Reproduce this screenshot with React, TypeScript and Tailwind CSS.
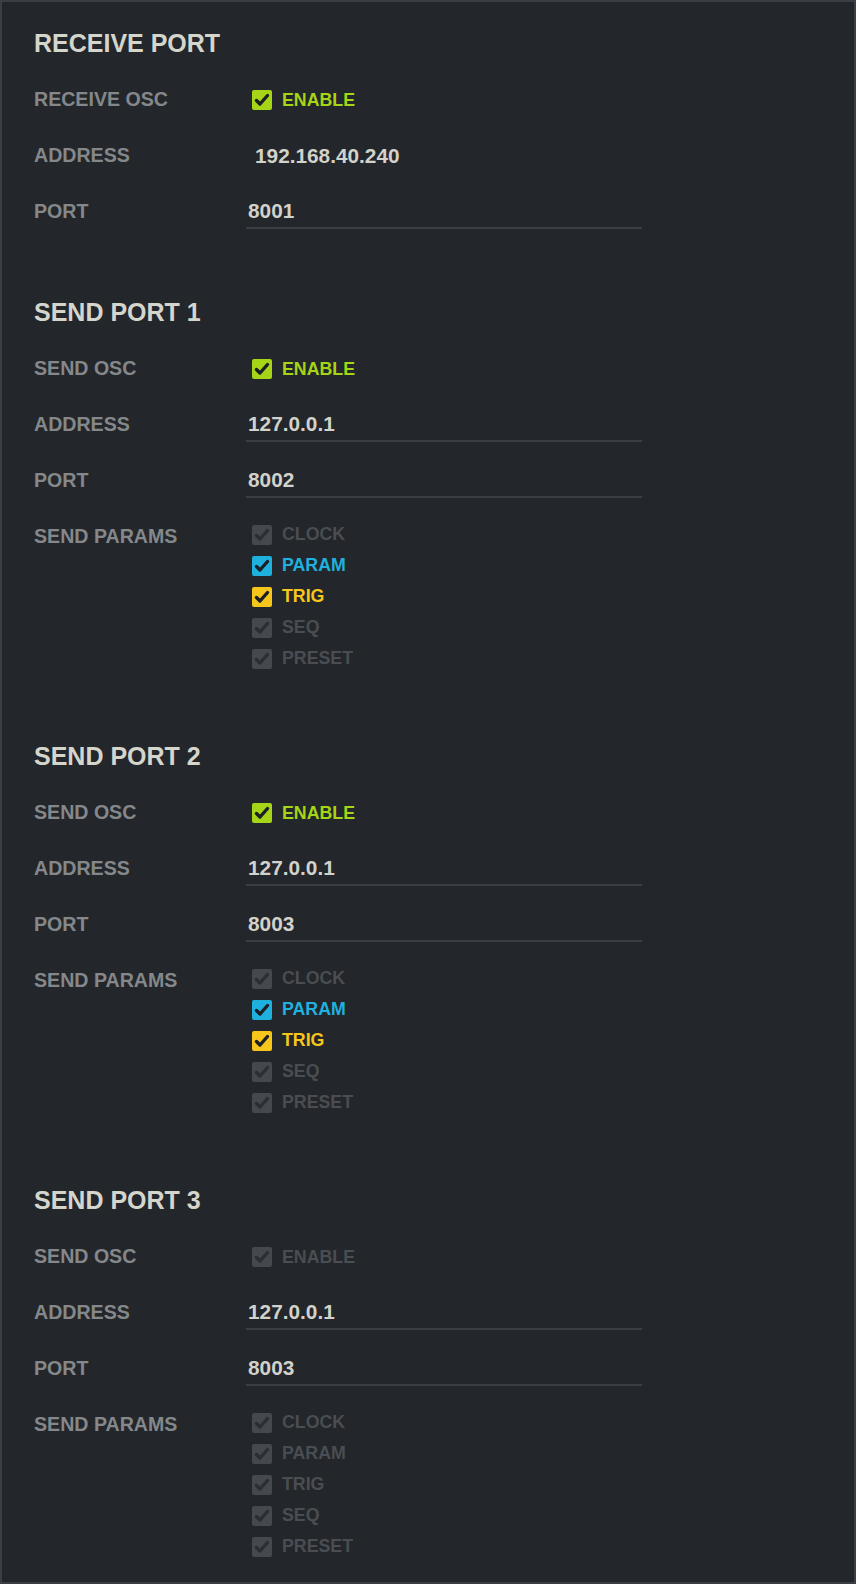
import React from "react";

type Tone = "green" | "blue" | "yellow" | "off";

const boxTone: Record<Tone, string> = {
  green: "bg-[#a6d417]",
  blue: "bg-[#1fb1de]",
  yellow: "bg-[#f7c61a]",
  off: "bg-[#45484d]",
};

const textTone: Record<Tone, string> = {
  green: "text-[#a6d417]",
  blue: "text-[#1fb1de]",
  yellow: "text-[#f7c61a]",
  off: "text-[#4a4d51]",
};

function Check({ tone, label }: { tone: Tone; label: string }) {
  return (
    <div className="flex items-center h-[31px] pl-[6px]">
      <span className={`w-[20px] h-[20px] rounded-[2px] flex items-center justify-center ${boxTone[tone]}`}>
        <svg width="20" height="20" viewBox="0 0 20 20">
          <path
            d="M4.5 10.5 L8 14 L15.5 5.5"
            fill="none"
            stroke={tone === "off" ? "#2b2e32" : "#1c1f23"}
            strokeWidth="3.4"
            strokeLinecap="round"
            strokeLinejoin="round"
          />
        </svg>
      </span>
      <span className={`ml-[10px] text-[17.75px] font-bold ${textTone[tone]}`}>{label}</span>
    </div>
  );
}

function Row({ label, children }: { label: string; children: React.ReactNode }) {
  return (
    <div className="flex items-center h-14">
      <div className="w-[212px] text-[19.6px] font-bold text-[#85888a]">{label}</div>
      <div className="w-[396px]">{children}</div>
    </div>
  );
}

function Input({ value }: { value: string }) {
  return (
    <div className="h-[34px] flex items-center pl-[2px] border-b-2 border-[#3b3e44] text-[20.8px] font-bold text-[#d2d2ca]">
      {value}
    </div>
  );
}

const paramNames = ["CLOCK", "PARAM", "TRIG", "SEQ", "PRESET"];

function SendPort({ n, enabled, port }: { n: number; enabled: boolean; port: string }) {
  const tones: Tone[] = enabled ? ["off", "blue", "yellow", "off", "off"] : ["off", "off", "off", "off", "off"];
  return (
    <section>
      <h2 className="h-14 flex items-center text-[25px] font-bold text-[#d4d5cb]">SEND PORT {n}</h2>
      <Row label="SEND OSC">
        <Check tone={enabled ? "green" : "off"} label="ENABLE" />
      </Row>
      <Row label="ADDRESS">
        <Input value="127.0.0.1" />
      </Row>
      <Row label="PORT">
        <Input value={port} />
      </Row>
      <div className="flex">
        <div className="w-[212px] h-14 flex items-center text-[19.6px] font-bold text-[#85888a]">SEND PARAMS</div>
        <div className="py-[10px]">
          {paramNames.map((p, i) => (
            <Check key={p} tone={tones[i]} label={p} />
          ))}
        </div>
      </div>
    </section>
  );
}

export default function App() {
  return (
    <div
      className="w-[856px] h-[1584px] border-2 border-[#3b3f45] bg-[#23262b] pl-8 pt-[14px] pb-[10px] flex flex-col gap-[45px]"
      style={{ fontFamily: '"Liberation Sans", Arial, sans-serif' }}
    >
      <section>
        <h2 className="h-14 flex items-center text-[25px] font-bold text-[#d4d5cb]">RECEIVE PORT</h2>
        <Row label="RECEIVE OSC">
          <Check tone="green" label="ENABLE" />
        </Row>
        <Row label="ADDRESS">
          <div className="pl-[9px] text-[20.8px] font-bold text-[#d2d2ca]">192.168.40.240</div>
        </Row>
        <Row label="PORT">
          <Input value="8001" />
        </Row>
      </section>
      <SendPort n={1} enabled port="8002" />
      <SendPort n={2} enabled port="8003" />
      <SendPort n={3} enabled={false} port="8003" />
    </div>
  );
}
